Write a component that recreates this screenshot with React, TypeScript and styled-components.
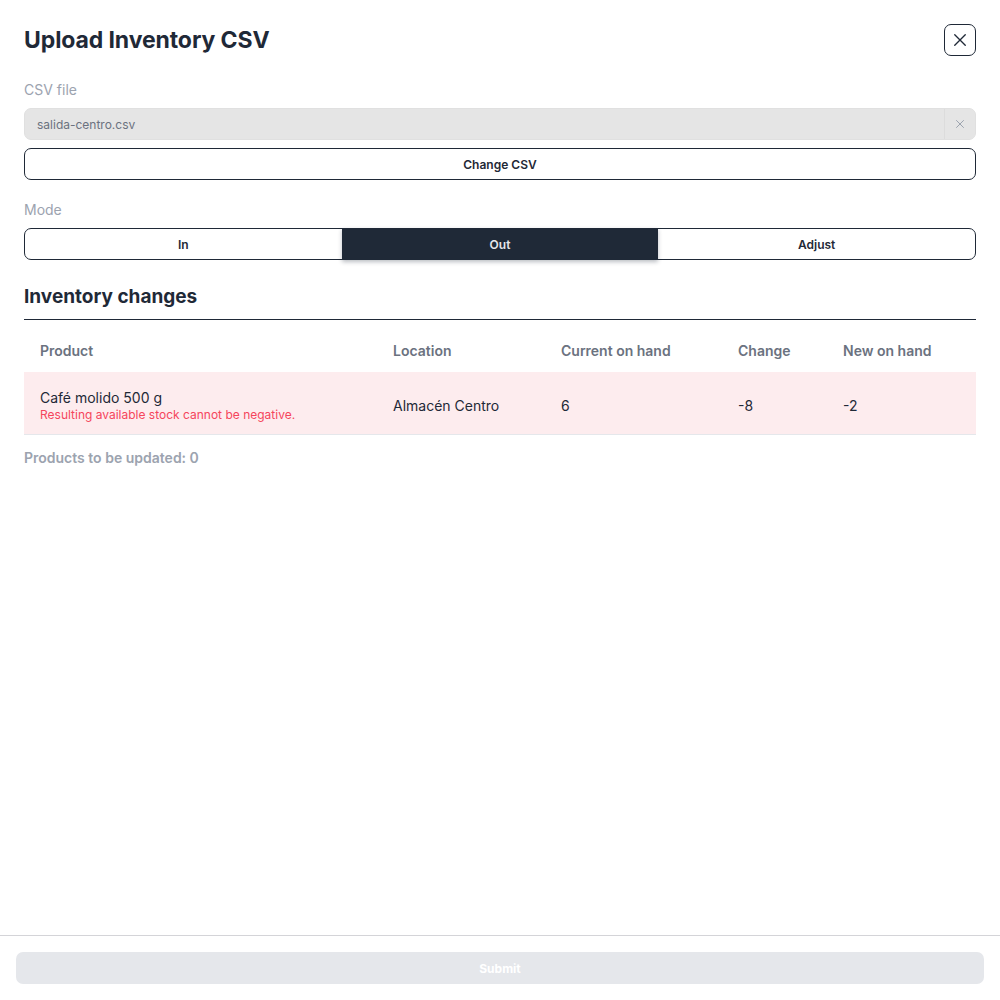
import React, { useState } from "react";
import styled, { createGlobalStyle } from "styled-components";

const GlobalStyle = createGlobalStyle`
  html, body {
    margin: 0;
    padding: 0;
    background: #ffffff;
  }
  body {
    font-family: Inter, "Noto Sans", "Liberation Sans", sans-serif;
    color: #1f2937;
  }
  * {
    box-sizing: border-box;
  }
`;

const rows = [
  {
    product: "Café molido 500 g",
    error: "Resulting available stock cannot be negative.",
    location: "Almacén Centro",
    current: 6,
    change: -8,
    next: -2,
  },
];

const modes = ["In", "Out", "Adjust"];

function App() {
  const [mode, setMode] = useState("Out");

  return (
    <>
      <GlobalStyle />
      <Page>
        <Body>
          <Header>
            <Title>Upload Inventory CSV</Title>
            <CloseButton aria-label="Close">
              <svg width="18" height="18" viewBox="0 0 24 24" fill="none" stroke="currentColor" strokeWidth="1.8" strokeLinecap="round">
                <path d="M5 5l14 14M19 5L5 19" />
              </svg>
            </CloseButton>
          </Header>

          <Field>
            <Label>CSV file</Label>
            <FileInput>
              <FileName>salida-centro.csv</FileName>
              <ClearButton aria-label="Clear">
                <svg width="12" height="12" viewBox="0 0 24 24" fill="none" stroke="currentColor" strokeWidth="2" strokeLinecap="round">
                  <path d="M5 5l14 14M19 5L5 19" />
                </svg>
              </ClearButton>
            </FileInput>
            <OutlineButton>Change CSV</OutlineButton>
          </Field>

          <Field>
            <Label>Mode</Label>
            <Segmented>
              {modes.map((m) => (
                <Segment key={m} active={m === mode} onClick={() => setMode(m)}>
                  {m}
                </Segment>
              ))}
            </Segmented>
          </Field>

          <Section>
            <SectionTitle>Inventory changes</SectionTitle>
            <Table>
              <HeadRow>
                <HeadCell>Product</HeadCell>
                <HeadCell>Location</HeadCell>
                <HeadCell>Current on hand</HeadCell>
                <HeadCell>Change</HeadCell>
                <HeadCell>New on hand</HeadCell>
              </HeadRow>
              {rows.map((r, i) => (
                <DataRow key={i} invalid={!!r.error}>
                  <ProductCell>
                    <ProductName>{r.product}</ProductName>
                    {r.error && <ErrorText>{r.error}</ErrorText>}
                  </ProductCell>
                  <Cell>{r.location}</Cell>
                  <Cell>{r.current}</Cell>
                  <Cell>{r.change}</Cell>
                  <Cell>{r.next}</Cell>
                </DataRow>
              ))}
            </Table>
            <Summary>Products to be updated: 0</Summary>
          </Section>
        </Body>

        <Footer>
          <SubmitButton disabled>Submit</SubmitButton>
        </Footer>
      </Page>
    </>
  );
}

const Page = styled.div`
  display: flex;
  flex-direction: column;
  height: 100vh;
  background: #ffffff;
`;

const Body = styled.div`
  flex: 1;
  padding: 24px 24px 0 24px;
  display: flex;
  flex-direction: column;
`;

const Header = styled.div`
  display: flex;
  align-items: center;
  justify-content: space-between;
  height: 32px;
  margin-bottom: 24px;
`;

const Title = styled.h1`
  margin: 0;
  font-size: 23px;
  font-weight: 700;
  color: #1f2937;
  letter-spacing: -0.1px;
`;

const CloseButton = styled.button`
  width: 32px;
  height: 32px;
  border: 1px solid #1f2937;
  border-radius: 7px;
  background: #ffffff;
  color: #1f2937;
  display: flex;
  align-items: center;
  justify-content: center;
  padding: 0;
  cursor: pointer;
`;

const Field = styled.div`
  display: flex;
  flex-direction: column;
  gap: 8px;
  margin-bottom: 20px;
`;

const Label = styled.div`
  font-size: 14px;
  line-height: 20px;
  color: #9ca3af;
`;

const FileInput = styled.div`
  display: flex;
  align-items: center;
  height: 32px;
  background: #e5e5e5;
  border: 1px solid #e0e0e0;
  border-radius: 7px;
  overflow: hidden;
`;

const FileName = styled.div`
  flex: 1;
  padding-left: 12px;
  font-size: 12px;
  color: #6b7280;
`;

const ClearButton = styled.button`
  width: 31px;
  height: 100%;
  border: none;
  border-left: 1px solid #dcdcdc;
  background: #e5e5e5;
  color: #9ca3af;
  display: flex;
  align-items: center;
  justify-content: center;
  padding: 0;
`;

const OutlineButton = styled.button`
  height: 32px;
  border: 1px solid #1f2937;
  border-radius: 7px;
  background: #ffffff;
  font-family: inherit;
  font-size: 12px;
  font-weight: 600;
  color: #1f2937;
  cursor: pointer;
`;

const Segmented = styled.div`
  display: grid;
  grid-template-columns: 1fr 1fr 1fr;
  height: 32px;
  border: 1px solid #1f2937;
  border-radius: 7px;
`;

const Segment = styled.button<{ active?: boolean }>`
  border: none;
  background: ${(p) => (p.active ? "#1f2937" : "transparent")};
  color: ${(p) => (p.active ? "#e5e7eb" : "#1f2937")};
  box-shadow: ${(p) => (p.active ? "0 2px 4px rgba(31, 41, 55, 0.3)" : "none")};
  margin: ${(p) => (p.active ? "-1px 0" : "0")};
  border-radius: ${(p) => (p.active ? "1px" : "6px")};
  font-family: inherit;
  font-size: 12px;
  font-weight: 600;
  cursor: pointer;
`;

const Section = styled.div`
  display: flex;
  flex-direction: column;
  margin-top: 4px;
`;

const SectionTitle = styled.h2`
  margin: 0;
  padding-bottom: 9px;
  font-size: 19px;
  line-height: 26px;
  font-weight: 700;
  color: #1f2937;
  border-bottom: 1px solid #1f2937;
`;

const Table = styled.div`
  display: flex;
  flex-direction: column;
`;

const rowGrid = `
  display: grid;
  grid-template-columns: 353px 168px 177px 105px 1fr;
  align-items: center;
`;

const HeadRow = styled.div`
  ${rowGrid}
  height: 52px;
  padding-top: 9px;
`;

const HeadCell = styled.div`
  padding: 0 16px;
  font-size: 14px;
  font-weight: 600;
  color: #6b7280;
`;

const DataRow = styled.div<{ invalid?: boolean }>`
  ${rowGrid}
  height: 63px;
  padding-top: 4px;
  background: ${(p) => (p.invalid ? "#fdecee" : "transparent")};
  border-bottom: 1px solid #e5e7eb;
`;

const Cell = styled.div`
  padding: 0 16px;
  font-size: 14px;
  color: #1f2937;
`;

const ProductCell = styled(Cell)`
  padding-top: 2px;
`;

const ProductName = styled.div`
  font-size: 14px;
  line-height: 18px;
  color: #1f2937;
`;

const ErrorText = styled.div`
  font-size: 12px;
  line-height: 16px;
  color: #f5455c;
`;

const Summary = styled.div`
  margin-top: 14px;
  font-size: 14px;
  font-weight: 600;
  color: #9ca3af;
`;

const Footer = styled.div`
  border-top: 1px solid #d4d4d8;
  padding: 16px;
`;

const SubmitButton = styled.button`
  width: 100%;
  height: 32px;
  border: none;
  border-radius: 7px;
  background: #e5e7eb;
  color: #ffffff;
  font-family: inherit;
  font-size: 12px;
  font-weight: 700;
`;

export default App;
